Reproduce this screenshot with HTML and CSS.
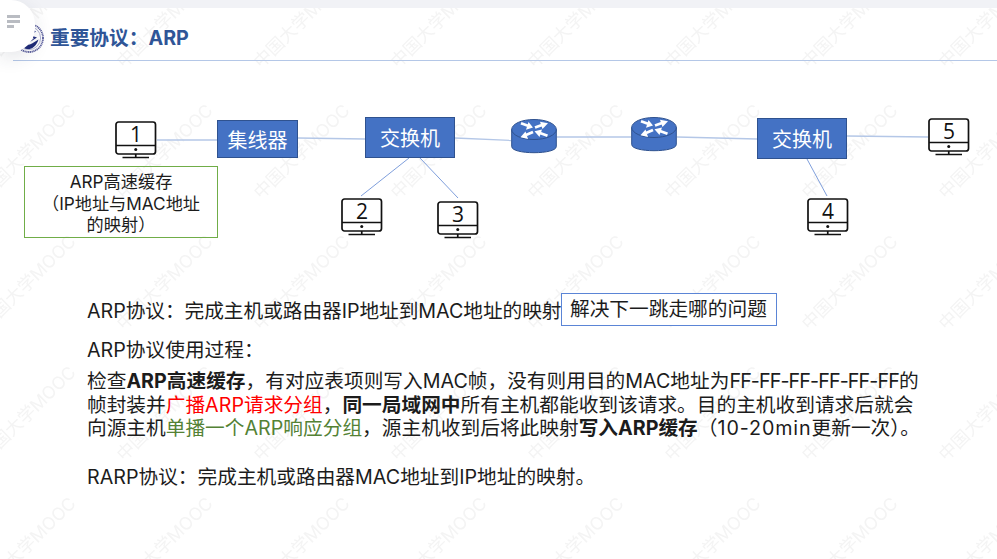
FILE: index.html
```html
<!DOCTYPE html>
<html lang="zh">
<head>
<meta charset="utf-8">
<title>重要协议：ARP</title>
<link rel="stylesheet" href="styles.css">
</head>
<body>
<svg class="defs" width="0" height="0" aria-hidden="true">
  <defs>
    <g id="monitor" fill="none" stroke="#111" stroke-width="1.700">
      <rect x="1" y="1" width="39.500" height="32" rx="2.500"/>
      <path d="M1 24.500H40.500M20.750 33V36M7.500 36.500H34"/>
      <circle cx="20.750" cy="28.500" r="1.500" fill="#111" stroke="none"/>
    </g>
    <g id="router">
      <path d="M.7 10.500V27.500C.7 31.500 11 33.700 23 33.700S45.300 31.500 45.300 27.500V10.500Z" fill="#4472c4" stroke="#2f528f"/>
      <ellipse cx="23" cy="10.500" rx="22.300" ry="10" fill="#4472c4" stroke="#2f528f"/>
      <g stroke="#fff" stroke-width="2.800" fill="none">
        <path d="M10 4.300L17 6.800"/>
        <path d="M24 8.500L31 6"/>
        <path d="M22 13L15 16"/>
        <path d="M36.500 16.700L29 14"/>
      </g>
      <g fill="#fff">
        <path d="M22 8.500L15 10.800L17.500 3Z"/>
        <path d="M37 4.300L29 2.800L31.500 10Z"/>
        <path d="M9.500 18.300L17 20L14.500 12.500Z"/>
        <path d="M23.500 12.200L31 10.500L28.500 18Z"/>
      </g>
    </g>
    <pattern id="marks" patternUnits="userSpaceOnUse" x="114" y="95" width="137" height="131">
      <text class="mark" x="0" y="0" transform="translate(10 97) rotate(-44.500)">中国大学MOOC</text>
    </pattern>
  </defs>
</svg>

<div class="topbar"></div>

<main class="slide">
  <svg class="watermark" aria-hidden="true"><rect width="100%" height="100%" fill="url(#marks)"/></svg>

  <button class="menu-tab" aria-label="目录">
    <span class="menu-line"></span>
    <span class="menu-line"></span>
    <span class="menu-line short"></span>
  </button>

  <header class="slide-head">
    <svg class="logo" viewBox="0 0 30 30" aria-hidden="true">
      <circle cx="15" cy="15" r="14" fill="#fff" stroke="#565a9a" stroke-width="1.800" stroke-dasharray="1.200 .6"/>
      <circle cx="15" cy="15" r="11.600" fill="none" stroke="#8d90bd" stroke-width=".7"/>
      <path d="M5.500 17C9 22 14 23 18 20.500L24.500 16.500C22.500 23 18 26.500 13 26C9 25.500 6.500 22 5.500 17Z" fill="#1e2a78"/>
      <path d="M10 16.500L17 12.500L23 14.500L16 19Z" fill="#232f80"/>
      <path d="M13 10.500C16 7 19 6.500 22 8.500L18 11.500Z" fill="#2a3a8c"/>
      <path d="M12.500 17.500L17 14.800L20 15.500L16 18Z" fill="#fff"/>
    </svg>
    <h1 class="slide-title">重要协议：ARP</h1>
  </header>

  <section class="diagram">
    <svg class="links" aria-hidden="true">
      <g class="link-pale">
        <path d="M157 79H217"/>
        <path d="M298 77L365 78"/>
        <path d="M455 77L511 79.500"/>
        <path d="M557 76H631"/>
        <path d="M677 76L757 78"/>
        <path d="M847 75L928 76"/>
      </g>
      <g class="link-thin">
        <path d="M409 97L361 135"/>
        <path d="M420 97L458 137"/>
        <path d="M807 98L827 135"/>
      </g>
    </svg>

    <svg class="node host host-1" viewBox="0 0 42 38"><use href="#monitor"/><text x="21" y="20.500" class="host-num">1</text></svg>
    <svg class="node host host-2" viewBox="0 0 42 38"><use href="#monitor"/><text x="21" y="20.500" class="host-num">2</text></svg>
    <svg class="node host host-3" viewBox="0 0 42 38"><use href="#monitor"/><text x="21" y="20.500" class="host-num">3</text></svg>
    <svg class="node host host-4" viewBox="0 0 42 38"><use href="#monitor"/><text x="21" y="20.500" class="host-num">4</text></svg>
    <svg class="node host host-5" viewBox="0 0 42 38"><use href="#monitor"/><text x="21" y="20.500" class="host-num">5</text></svg>

    <div class="node device hub">集线器</div>
    <div class="node device switch-a">交换机</div>
    <div class="node device switch-b">交换机</div>

    <svg class="node router router-a" viewBox="0 0 46 35"><use href="#router"/></svg>
    <svg class="node router router-b" viewBox="0 0 46 35"><use href="#router"/></svg>

    <div class="node cache-note">ARP高速缓存<br>（IP地址与MAC地址<br>的映射）</div>
  </section>

  <section class="notes">
    <div class="note-row">
      <p class="note">ARP协议：完成主机或路由器IP地址到MAC地址的映射</p>
      <p class="callout">解决下一跳走哪的问题</p>
    </div>
    <p class="note usage">ARP协议使用过程：</p>
    <p class="process">检查<b>ARP高速缓存</b>，有对应表项则写入MAC帧，没有则用目的MAC地址为<span class="mac-all">FF-FF-FF-FF-FF-FF</span>的<br>帧封装并<span class="red">广播ARP请求分组</span>，<b>同一局域网中</b>所有主机都能收到该请求。目的主机收到请求后就会<br>向源主机<span class="green">单播一个ARP响应分组</span>，源主机收到后将此映射<b>写入ARP缓存</b>（<span class="period">10-20min</span>更新一次）。</p>
    <p class="note rarp">RARP协议：完成主机或路由器MAC地址到IP地址的映射。</p>
  </section>
</main>
</body>
</html>
```

FILE: styles.css
```css
* { box-sizing: border-box; }

html, body {
  margin: 0;
  height: 100%;
  overflow: hidden;
  background: #fff;
}

body {
  font-family: Inter, "Noto Sans CJK SC", sans-serif;
  color: #1c1c1c;
}

.defs { position: absolute; }

.mark {
  font-family: Inter, "Noto Sans CJK SC", sans-serif;
  font-size: 17.600px;
  font-weight: 400;
  fill: #f4f4f4;
}

.topbar {
  height: 8px;
  background: #f1f2f6;
}

.slide {
  position: relative;
  height: 551px;
  background: #fff;
}

.watermark {
  position: absolute;
  inset: 0;
  width: 100%;
  height: 100%;
  z-index: 0;
}

.menu-tab {
  position: absolute;
  left: 0;
  top: -8px;
  z-index: 3;
  width: 35px;
  height: 52px;
  padding: 15px 0 0 7px;
  border: 0;
  border-radius: 0 24px 24px 0;
  background: #fff;
  box-shadow: 0 6px 18px rgba(40, 50, 70, .12);
  display: flex;
  flex-direction: column;
  gap: 2.500px;
}

.menu-line {
  width: 13px;
  height: 2.500px;
  background: #b9bcc2;
}

.menu-line.short { width: 7px; }

.slide-head {
  position: relative;
  z-index: 1;
  height: 53px;
  margin-left: 13px;
  padding: 15px 0 0 1px;
  border-bottom: 1px solid #b4c7e7;
  display: flex;
  align-items: flex-start;
  gap: 6px;
}

.logo {
  width: 30px;
  height: 30px;
  flex: none;
}

.slide-title {
  margin: 1px 0 0;
  font-size: 19.700px;
  line-height: 28px;
  font-weight: 700;
  color: #2f5597;
}

.diagram {
  position: relative;
  z-index: 1;
  height: 232px;
}

.links {
  position: absolute;
  left: 0;
  top: 0;
  width: 100%;
  height: 100%;
}

.links path { fill: none; }
.link-pale { stroke: #b4c7e7; stroke-width: 1.300; }
.link-thin { stroke: #7f9fdc; stroke-width: 1; }

.node { position: absolute; }

.host {
  width: 42px;
  height: 38px;
}

.host-num {
  font-family: "Open Sans", sans-serif;
  font-size: 21px;
  text-anchor: middle;
  fill: #111;
}

.host-1 { left: 115px; top: 60px; }
.host-2 { left: 341px; top: 137px; }
.host-3 { left: 437px; top: 140px; }
.host-4 { left: 807px; top: 137px; }
.host-5 { left: 928px; top: 57px; }

.device {
  display: flex;
  align-items: center;
  justify-content: center;
  background: #4472c4;
  border: 1px solid #2f528f;
  color: #fff;
  font-size: 20px;
}

.hub { left: 217px; top: 59px; width: 81px; height: 38px; }
.switch-a { left: 365px; top: 56px; width: 90px; height: 41px; }
.switch-b { left: 757px; top: 57px; width: 90px; height: 41px; }

.router {
  width: 46px;
  height: 35px;
}

.router-a { left: 511px; top: 58px; }
.router-b { left: 631px; top: 56px; }

.cache-note {
  left: 24px;
  top: 105px;
  width: 194px;
  height: 72px;
  padding: 4px 0 0;
  border: 1px solid #70ad47;
  font-size: 17.200px;
  line-height: 21.500px;
  text-align: center;
}

.notes {
  position: relative;
  z-index: 1;
  padding-left: 87px;
}

.note-row {
  display: flex;
  align-items: center;
  height: 33px;
}

.note, .callout, .process {
  margin: 0;
  font-size: 19.700px;
  white-space: nowrap;
}

.note { line-height: 28px; }

.note-row .note {
  width: 474px;
  padding-top: 2px;
  letter-spacing: -.05px;
}

.callout {
  height: 33px;
  padding: 0 8px;
  width: 216px;
  border: 1px solid #5b85d6;
  line-height: 30px;
  background: #fff;
}

.usage { margin-top: 10px; }

.process {
  margin-top: 6px;
  line-height: 23.700px;
}

.mac-all { letter-spacing: -.9px; }

.period { letter-spacing: .9px; }

.red { color: #ff0000; }
.green { color: #548235; }

.rarp { margin-top: 22px; }
```
